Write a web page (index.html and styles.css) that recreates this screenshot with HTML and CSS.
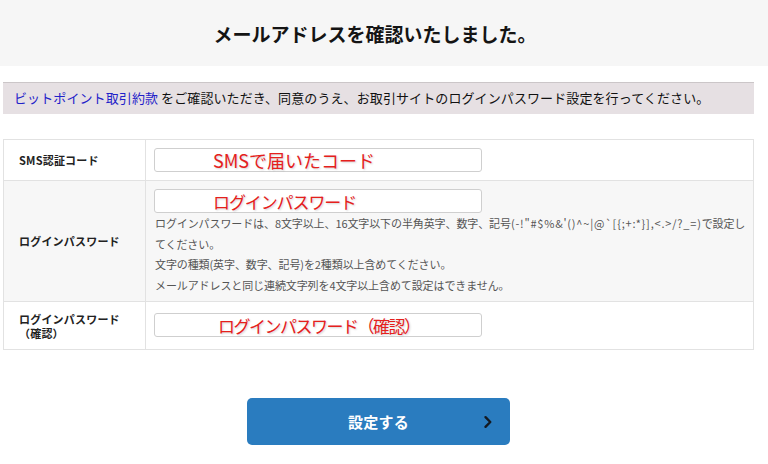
FILE: index.html
```html
<!DOCTYPE html>
<html lang="ja">
<head>
<meta charset="utf-8">
<title>メールアドレスを確認いたしました。</title>
<link rel="stylesheet" href="styles.css">
</head>
<body>
<header class="hero">
  <h1 class="hero-title">メールアドレスを確認いたしました。</h1>
</header>
<main class="content">
  <p class="notice"><a class="notice-link" href="#">ビットポイント取引約款</a> をご確認いただき、同意のうえ、お取引サイトのログインパスワード設定を行ってください。</p>

  <div class="form">
    <div class="row row-first">
      <div class="label">SMS認証コード</div>
      <div class="field">
        <div class="input"><span class="hint hint-sms">SMSで届いたコード</span></div>
      </div>
    </div>
    <div class="row row-alt">
      <div class="label">ログインパスワード</div>
      <div class="field field-help">
        <div class="input"><span class="hint hint-pw">ログインパスワード</span></div>
        <div class="help">
          <p class="help-line">ログインパスワードは、8文字以上、16文字以下の半角英字、数字、記号<span class="sym">(-!"#$%&amp;'()^~|@`[{;+:*}],&lt;.&gt;/?_=)</span>で設定してください。</p>
          <p class="help-line">文字の種類(英字、数字、記号)を2種類以上含めてください。</p>
          <p class="help-line">メールアドレスと同じ連続文字列を4文字以上含めて設定はできません。</p>
        </div>
      </div>
    </div>
    <div class="row row-last">
      <div class="label label-two">ログインパスワード<br>（確認）</div>
      <div class="field field-last">
        <div class="input"><span class="hint hint-confirm">ログインパスワード（確認）</span></div>
      </div>
    </div>
  </div>

  <div class="actions">
    <button class="submit" type="button">
      <span class="submit-spacer"></span>
      <span class="submit-text">設定する</span>
      <svg class="submit-chevron" width="10" height="14" viewBox="0 0 10 14" aria-hidden="true">
        <path d="M2.5 2.2 L7.3 7 L2.5 11.8" fill="none" stroke="#141a22" stroke-width="2.4" stroke-linecap="round" stroke-linejoin="round"/>
      </svg>
    </button>
  </div>
</main>
</body>
</html>
```

FILE: styles.css
```css
* {
  box-sizing: border-box;
}

body {
  margin: 0;
  background: #ffffff;
  color: #1a1a1a;
  font-family: "Noto Sans CJK JP", "Noto Sans", sans-serif;
}

.hero {
  background: #f6f6f6;
  height: 66px;
  padding-right: 18px;
  display: flex;
  align-items: center;
  justify-content: center;
}

.hero-title {
  margin: 0;
  font-size: 19px;
  font-weight: 700;
  color: #141414;
  line-height: 1;
}

.content {
  margin-left: 3px;
  width: 751px;
}

.notice {
  margin: 16px 0 0;
  height: 32px;
  background: #e6e0e3;
  border-top: 1px solid #cbc6c8;
  padding-left: 11px;
  font-size: 13px;
  line-height: 30px;
  color: #111;
  letter-spacing: 0.1px;
}

.notice-link {
  color: #1f22c9;
  text-decoration: none;
}

.form {
  margin-top: 25px;
  border: 1px solid #e2e2e2;
}

.row {
  display: grid;
  grid-template-columns: 142px 1fr;
  border-top: 1px solid #e2e2e2;
}

.row-first {
  border-top: none;
}

.row-alt {
  background: #f7f7f7;
}

.label {
  display: flex;
  align-items: center;
  padding-left: 15px;
  border-right: 1px solid #e2e2e2;
  font-size: 11px;
  font-weight: 700;
  color: #222;
  letter-spacing: 0.2px;
}

.label-two {
  line-height: 14px;
  padding-top: 1px;
}

.field {
  padding: 8px 4px 8px 8px;
}

.field-help {
  padding-bottom: 6px;
}

.field-last {
  padding-top: 11px;
  padding-bottom: 12px;
}

.input {
  width: 328px;
  height: 24px;
  background: #ffffff;
  border: 1px solid #cfcfcf;
  border-radius: 3px;
  display: flex;
  align-items: center;
  overflow: visible;
  white-space: nowrap;
}

.hint {
  color: #e5201c;
  font-weight: 400;
  text-shadow: 1px 1px 2px rgba(0, 0, 0, 0.18);
  line-height: 1;
}

.hint-sms {
  margin-left: 58px;
  font-size: 18px;
}

.hint-pw {
  margin-left: 58px;
  font-size: 17px;
  letter-spacing: -1.1px;
}

.hint-confirm {
  margin-left: 63px;
  font-size: 17px;
  letter-spacing: -1.5px;
}

.help {
  padding-left: 1px;
}

.help-line {
  margin: 0;
  font-size: 11px;
  line-height: 20.5px;
  color: #555;
  letter-spacing: -0.1px;
}

.sym {
  letter-spacing: 0.8px;
}

.actions {
  margin-top: 48px;
  display: flex;
  justify-content: center;
}

.submit {
  width: 263px;
  height: 47px;
  background: #2a7cbf;
  border: none;
  border-radius: 5px;
  padding: 0 17px;
  display: grid;
  grid-template-columns: 1fr auto 1fr;
  align-items: center;
  font-family: "Noto Sans CJK JP", "Noto Sans", sans-serif;
  cursor: pointer;
}

.submit-text {
  color: #ffffff;
  font-size: 15px;
  font-weight: 700;
  letter-spacing: 0.3px;
}

.submit-chevron {
  justify-self: end;
}
```
